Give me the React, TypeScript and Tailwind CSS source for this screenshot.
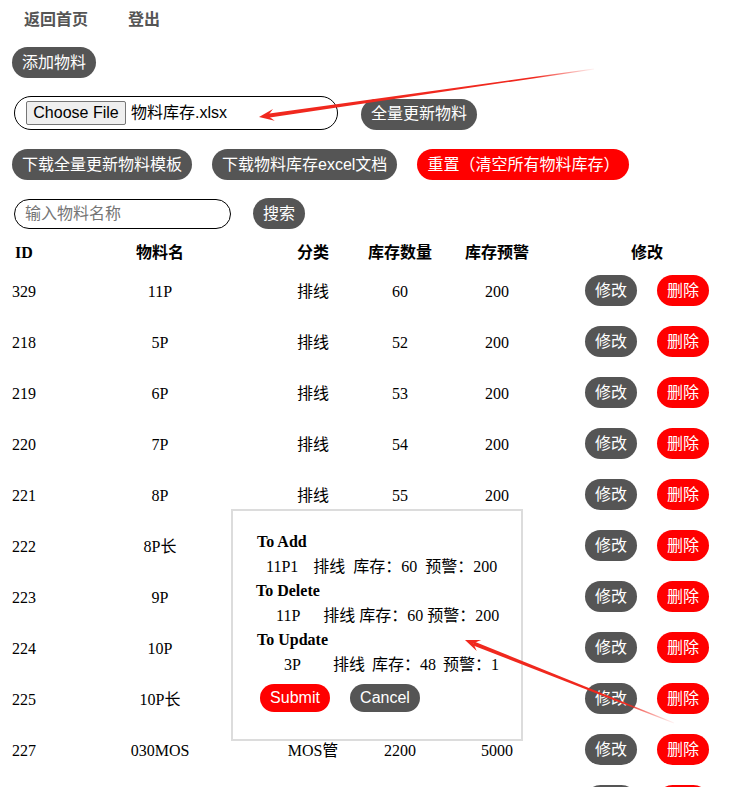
import React from 'react'

const serif = '[font-family:"Liberation_Serif","Noto_Sans_CJK_SC",serif]'
const sans = '[font-family:"Liberation_Sans","Noto_Sans_CJK_SC",sans-serif]'

type Row = { id: string; name: string; kind: string; qty: string; warn: string }

// rows 222-225 sit behind the confirm box, so their middle cells stay blank
const rows: Row[] = [
  { id: '329', name: '11P', kind: '排线', qty: '60', warn: '200' },
  { id: '218', name: '5P', kind: '排线', qty: '52', warn: '200' },
  { id: '219', name: '6P', kind: '排线', qty: '53', warn: '200' },
  { id: '220', name: '7P', kind: '排线', qty: '54', warn: '200' },
  { id: '221', name: '8P', kind: '排线', qty: '55', warn: '200' },
  { id: '222', name: '8P长', kind: '', qty: '', warn: '' },
  { id: '223', name: '9P', kind: '', qty: '', warn: '' },
  { id: '224', name: '10P', kind: '', qty: '', warn: '' },
  { id: '225', name: '10P长', kind: '', qty: '', warn: '' },
  { id: '227', name: '030MOS', kind: 'MOS管', qty: '2200', warn: '5000' },
  { id: '', name: '', kind: '', qty: '', warn: '' },
]

const Pill = ({ children, red, className = '' }: { children: React.ReactNode; red?: boolean; className?: string }) => (
  <button
    className={`${sans} flex h-[31px] shrink-0 items-center rounded-full px-[10px] text-[16px] text-white ${
      red ? 'bg-[#ff0000]' : 'bg-[#555555]'
    } ${className}`}
  >
    {children}
  </button>
)

// arrow annotation: thin fading tail, thick tip
const arrow = (tail: [number, number], tip: [number, number]) => {
  const dx = tip[0] - tail[0]
  const dy = tip[1] - tail[1]
  const len = Math.hypot(dx, dy)
  const ux = dx / len
  const uy = dy / len
  const nx = -uy
  const ny = ux
  const p = (x: number, y: number) => `${x.toFixed(1)},${y.toFixed(1)}`
  const neckX = tip[0] - ux * 9
  const neckY = tip[1] - uy * 9
  const baseX = tip[0] - ux * 15
  const baseY = tip[1] - uy * 15
  const shaft = [
    p(tail[0] + nx * 0.4, tail[1] + ny * 0.4),
    p(neckX + nx * 2, neckY + ny * 2),
    p(neckX - nx * 2, neckY - ny * 2),
    p(tail[0] - nx * 0.4, tail[1] - ny * 0.4),
  ].join(' ')
  const head = [
    p(tip[0], tip[1]),
    p(baseX + nx * 6, baseY + ny * 6),
    p(neckX, neckY),
    p(baseX - nx * 6, baseY - ny * 6),
  ].join(' ')
  return { shaft, head }
}

const Arrows = () => {
  const a1 = arrow([594, 69], [259, 117])
  const a2 = arrow([674, 723], [465, 640])
  return (
    <svg className="pointer-events-none absolute left-0 top-0 z-20" width="736" height="787">
      <defs>
        <linearGradient id="g1" gradientUnits="userSpaceOnUse" x1="594" y1="69" x2="259" y2="117">
          <stop offset="0" stopColor="#f0281e" stopOpacity="0.05" />
          <stop offset="0.18" stopColor="#f0281e" stopOpacity="1" />
          <stop offset="1" stopColor="#f0281e" stopOpacity="1" />
        </linearGradient>
        <linearGradient id="g2" gradientUnits="userSpaceOnUse" x1="674" y1="723" x2="465" y2="640">
          <stop offset="0" stopColor="#f0281e" stopOpacity="0.05" />
          <stop offset="0.25" stopColor="#f0281e" stopOpacity="1" />
          <stop offset="1" stopColor="#f0281e" stopOpacity="1" />
        </linearGradient>
      </defs>
      <polygon points={a1.shaft} fill="url(#g1)" />
      <polygon points={a1.head} fill="#f0281e" />
      <polygon points={a2.shaft} fill="url(#g2)" />
      <polygon points={a2.head} fill="#f0281e" />
    </svg>
  )
}

const Confirm = () => (
  <div
    className={`${serif} absolute left-[231px] top-[509px] z-10 h-[232px] w-[292px] border-2 border-[#dcdcdc] bg-white pl-[24px] pt-[19px] text-[16px] text-black`}
  >
    <div className="h-[24.5px] font-bold leading-[24.5px]">To Add</div>
    <div className="flex h-[24.5px] items-center leading-[24.5px]">
      <span className="ml-[9px]">11P1</span>
      <span className="ml-[15px]">排线</span>
      <span className="ml-[8px]">库存：60</span>
      <span className="ml-[8px]">预警：200</span>
    </div>
    <div className="-ml-px h-[24.5px] font-bold leading-[24.5px]">To Delete</div>
    <div className="flex h-[24.5px] items-center leading-[24.5px]">
      <span className="ml-[19px]">11P</span>
      <span className="ml-[23px]">排线</span>
      <span className="ml-[4px]">库存：60</span>
      <span className="ml-[4px]">预警：200</span>
    </div>
    <div className="h-[24.5px] font-bold leading-[24.5px]">To Update</div>
    <div className="flex h-[24.5px] items-center leading-[24.5px]">
      <span className="ml-[27px]">3P</span>
      <span className="ml-[32px]">排线</span>
      <span className="ml-[7px]">库存：48</span>
      <span className="ml-[7px]">预警：1</span>
    </div>
    <div className={`${sans} ml-[3px] mt-[7px] flex gap-[20px]`}>
      <button className="h-[28px] w-[70px] rounded-full bg-[#ff0000] text-[16px] text-white">Submit</button>
      <button className="h-[28px] w-[70px] rounded-full bg-[#555555] text-[16px] text-white">Cancel</button>
    </div>
  </div>
)

export default function App() {
  return (
    <div className="relative h-[787px] w-[736px] overflow-hidden bg-white text-black">
      <div className={`${sans} flex h-[40px] items-center pl-[24px] text-[16px] font-bold text-[#555555]`}>
        <span>返回首页</span>
        <span className="ml-[40px]">登出</span>
      </div>

      <Pill className="ml-[12px] mt-[7px]">添加物料</Pill>

      <div className="mt-[18px] flex items-center">
        <div className="ml-[14px] flex h-[34px] w-[324px] items-center rounded-full border border-black pl-[11px]">
          <span
            className={`${sans} flex h-[24px] w-[100px] items-center justify-center rounded-[2px] border border-[#767676] bg-[#efefef] text-[16px] text-black`}
          >
            Choose File
          </span>
          <span className={`${sans} ml-[5px] text-[16px]`}>物料库存.xlsx</span>
        </div>
        <Pill className="ml-[23px] mt-[2px]">全量更新物料</Pill>
      </div>

      <div className="mt-[19px] flex">
        <Pill className="ml-[12px]">下载全量更新物料模板</Pill>
        <Pill className="ml-[20px]">下载物料库存excel文档</Pill>
        <Pill red className="ml-[20px]">
          重置（清空所有物料库存）
        </Pill>
      </div>

      <div className="mt-[18px] flex items-center">
        <input
          placeholder="输入物料名称"
          className={`${sans} ml-[14px] h-[30px] w-[217px] rounded-full border border-black pl-[10px] text-[16px] outline-none placeholder:text-[#757575]`}
        />
        <Pill className="ml-[22px] h-[30px]">搜索</Pill>
      </div>

      <div className={`${serif} mt-[12px] ml-[10px] text-[16px]`}>
        <div className="grid h-[24px] grid-cols-[28px_244px_62px_112px_82px_1fr] items-center font-bold">
          <div className="text-center">ID</div>
          <div className="text-center">物料名</div>
          <div className="text-center">分类</div>
          <div className="text-center">库存数量</div>
          <div className="text-center">库存预警</div>
          <div className="ml-[47px] w-[124px] text-center">修改</div>
        </div>
        {rows.map((r, i) => (
          <div key={i} className="grid h-[51px] grid-cols-[28px_244px_62px_112px_82px_1fr] items-center">
            <div className="translate-y-px text-center">{r.id}</div>
            <div className="translate-y-px text-center">{r.name}</div>
            <div className="translate-y-px text-center">{r.kind}</div>
            <div className="translate-y-px text-center">{r.qty}</div>
            <div className="translate-y-px text-center">{r.warn}</div>
            <div className={`${sans} ml-[47px] flex gap-[20px]`}>
              <button className="h-[31px] w-[52px] rounded-full bg-[#555555] text-[16px] text-white">
                {r.id ? '修改' : ''}
              </button>
              <button className="h-[31px] w-[52px] rounded-full bg-[#ff0000] text-[16px] text-white">
                {r.id ? '删除' : ''}
              </button>
            </div>
          </div>
        ))}
      </div>

      <Confirm />
      <Arrows />
    </div>
  )
}
